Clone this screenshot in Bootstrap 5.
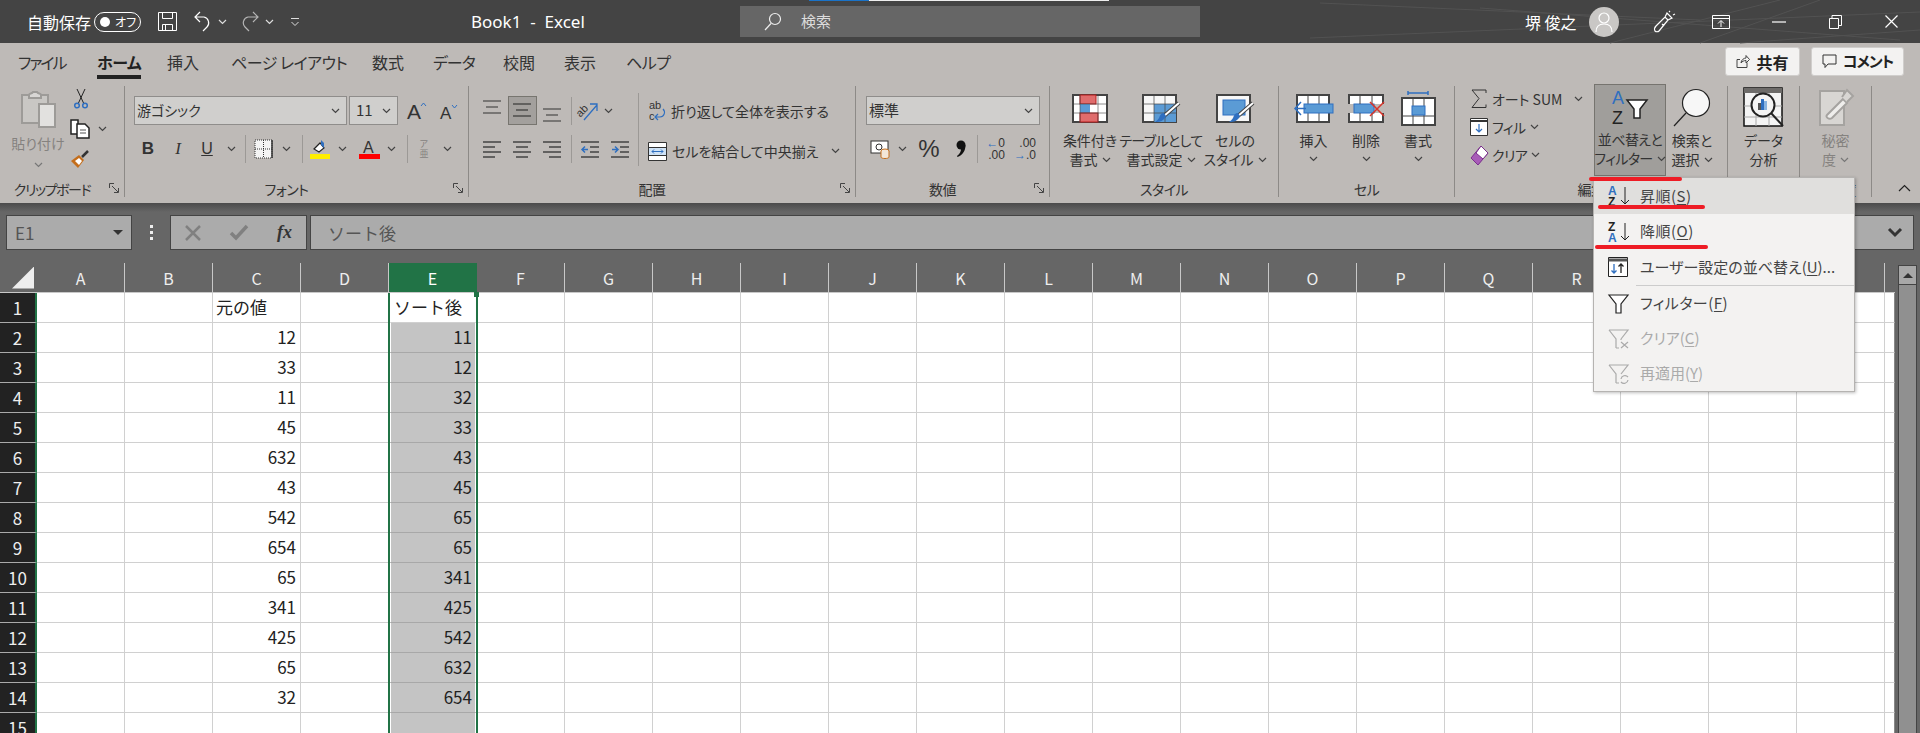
<!DOCTYPE html>
<html lang="ja">
<head>
<meta charset="UTF-8">
<title>Book1 - Excel</title>
<link href="https://cdn.jsdelivr.net/npm/bootstrap@5.3.1/dist/css/bootstrap.min.css" rel="stylesheet">
<style>
  html, body { height: 733px; overflow: hidden; background: #666; }
  body { font-family: "Noto Sans CJK JP", "Noto Sans", sans-serif; font-size: 14px; color: #333; }
  .app { position: relative; width: 1920px; height: 733px; overflow: hidden; font-feature-settings: "palt"; }
  svg { display: block; flex: none; overflow: visible; }
  .chv { width: 9px; height: 6px; fill: none; stroke: #444; stroke-width: 1.2; }
  .chv-dim { stroke: #777; }
  .ms-6px { margin-left: 6px; }
  .ms-13px { margin-left: 13px; }

  /* title bar */
  .titlebar { position: relative; height: 43px; background: #444; color: #fff; padding-left: 27px; }
  .title-lines { position: absolute; left: 1280px; top: 0; }
  .title-strip { position: absolute; left: 809px; top: 0; width: 300px; height: 1px; background: #eee; }
  .title-strip i { display: block; width: 60px; height: 1px; background: #1a73c8; }
  .autosave { font-size: 16px; width: 67px; }
  .toggle { width: 47px; height: 20px; border: 1px solid #fff; border-radius: 10px; font-size: 12px; padding-left: 5px; gap: 5px; line-height: 1; }
  .toggle b { width: 10px; height: 10px; border-radius: 50%; background: #fff; }
  .qat { width: 330px; padding-left: 16px; }
  .qat .chv { stroke: #ddd; }
  .doc-name { width: 269px; font-family: "Noto Sans", sans-serif; font-size: 17px; white-space: pre; }
  .searchbox { width: 460px; height: 31px; background: #666; color: #ddd; font-size: 15px; padding-left: 24px; gap: 19px; }
  .user-name { position: relative; margin-left: 325px; width: 64px; font-size: 16px; }
  .avatar { position: relative; width: 30px; height: 30px; border-radius: 50%; background: #c9c7c5; }
  .win-btns { position: relative; margin-left: 34px; }
  .w-ribbon { margin-left: 37px; } .w-min { margin-left: 42px; } .w-max { margin-left: 43px; } .w-close { margin-left: 43px; }

  /* ribbon */
  .ribbon { height: 160px; background: #bebab7; }
  .tabrow { height: 41px; padding-left: 18px; }
  .ribbon-tabs { display: grid; grid-template-columns: 79px 70px 64px 141px 61px 70px 61px 62px 60px; }
  .ribbon-tabs .nav-link { display: inline-block; height: 36px; line-height: 36px; padding: 0; color: #333; font-size: 16px; margin-top: 1px; white-space: nowrap; }
  .ribbon-tabs .nav-link.active { font-weight: 700; color: #222; height: 35px; box-shadow: inset 0 -4px 0 #222; }
  .ls-a { letter-spacing: -2px; } .ls-b { letter-spacing: -.5px; } .ls-c { letter-spacing: -1px; }
  .share-btns { gap: 11px; padding: 4px 16px 0 0; }
  .share { height: 29px; background: #f3f2f1; border: 1px solid #d0cecc; border-radius: 3px; font-size: 16px; font-weight: 700; color: #222; gap: 6px; }
  .share-a { width: 75px; }
  .share-b { width: 93px; font-size: 15px; letter-spacing: -1px; }

  .groups { height: 113px; }
  .rgroup { height: 113px; flex: none; }
  .gsep { width: 1px; height: 111px; margin-top: 2px; background: #8d8a87; flex: none; }
  .gbody { height: 98px; }
  .gcap { height: 15px; font-size: 14px; line-height: 15px; color: #333; letter-spacing: -.5px; }
  .gcap span { flex: 1; text-align: center; white-space: nowrap; }
  .gcap-clip { letter-spacing: -1.4px; }
  .launch { width: 20px; flex: none; padding-left: 5px; margin-top: 1px; }

  .g-clip { width: 124px; } .g-font { width: 343px; } .g-align { width: 386px; }
  .g-num { width: 193px; } .g-style { width: 228px; } .g-cell { width: 175px; }
  .g-edit { width: 272px; } .g-data { width: 71px; } .g-sens { width: 71px; }

  .bigbtn { display: flex; flex-direction: column; align-items: center; line-height: 19px; white-space: nowrap; }
  .bigicon { height: 46px; padding-top: 2px; }
  .bigtext { padding-top: 1px; }
  .dim { color: #85827f; }
  .chv-slot { padding-top: 6px; }

  .clip-l { width: 70px; padding-left: 6px; }
  .clip-paste { margin-top: 4px; }
  .clip-chv { padding-top: 9px; }
  .clip-r { padding-top: 5px; gap: 10px; }
  .clip-r > div { height: 20px; }

  .combo { height: 29px; background: #d0cfcd; border: 1px solid #8f8d8b; padding: 0 6px 0 2px; font-size: 14px; color: #333; }
  .c-font { width: 213px; } .c-size { width: 49px; font-size: 15px; } .c-num { width: 174px; font-size: 15px; }
  .tools { display: grid; place-items: center; height: 29px; }
  .vsep { width: 1px; height: 28px; background: #9c9996; }
  .font-pane { padding: 12px 0 0 9px; }
  .font-r1 { gap: 2px; }
  .font-r2 { grid-template-columns: 30px 30px 28px 20px 8px 28px 18px 14px 22px 22px 32px 12px 20px 14px 32px; margin-top: 9px; margin-left: -1px; }
  .grow-a { margin-left: 7px; gap: 13px; }
  .shrink-a { margin-top: 2px; }
  .gl-b { font-family: "Liberation Sans", sans-serif; font-size: 17px; }
  .gl-i { font-family: "Liberation Serif", serif; font-size: 17px; }
  .gl-u { font-family: "Liberation Sans", sans-serif; font-size: 16px; }
  .phonetic { font-size: 9px; line-height: 10px; }
  .align-l { padding: 12px 0 0 8px; width: 169px; }
  .al-r1 { grid-template-columns: 30px 30px 30px 8px 26px 14px; }
  .al-r2 { grid-template-columns: 30px 30px 30px 8px 30px 30px; margin-top: 9px; }
  .pressed { width: 29px; height: 29px; background: #a3a09d; border: 1px solid #77756f; display: grid; place-items: center; }
  .vsep-tall { width: 1px; height: 73px; margin-top: 9px; background: #9c9996; }
  .align-r { padding: 14px 0 0 9px; gap: 14px; white-space: nowrap; }
  .align-r > div { height: 26px; gap: 5px; }
  .num-pane { padding: 12px 0 0 10px; }
  .num-r2 { grid-template-columns: 28px 16px 38px 24px 11px 25px 34px; margin-top: 9px; }
  .gl-pct { font-family: "Liberation Sans", sans-serif; font-size: 24px; line-height: 1; }
  .decimal { font-family: "Liberation Sans", sans-serif; font-size: 12px; line-height: 12px; text-align: right; color: #333; }
  .decimal span { color: #2f6fc0; }
  .style-pane { padding-left: 6px; }
  .st-1 { width: 68px; } .st-2 { width: 74px; } .st-3 { width: 74px; }
  .tight { letter-spacing: -.6px; }
  .cell-pane { padding-left: 8px; }
  .ce-1 { width: 53px; } .ce-2 { width: 52px; } .ce-3 { width: 52px; }
  .edit-list { width: 139px; padding: 1px 0 0 15px; white-space: nowrap; }
  .edit-list > div { height: 28px; gap: 4px; }
  .sort-btn { width: 72px; height: 92px; background: #a09e9b; border: 1px solid #76746f; }
  .sort-btn .bigicon { height: 45px; padding-top: 4px; }
  .find-btn { width: 52px; }
  .find-glass { margin-top: 1px; }
  .sens-svg { margin-top: 2px; }

  .collapse-btn { padding: 0; margin-left: 26px; align-self: flex-end; margin-bottom: 5px; }
  .collapse-btn .chv { width: 13px; height: 8px; stroke: #222; }

  /* formula bar */
  .fbar { height: 60px; padding: 12px 6px 13px 6px; background: linear-gradient(#4b4b4b 0, #666 9px); }
  .fbox { height: 35px; background: #ababab; border: 1px solid #444; color: #555; }
  .namebox { width: 126px; padding: 0 8px; font-size: 17px; }
  .dots { width: 38px; gap: 3px; }
  .dots i { width: 3px; height: 3px; background: #eee; }
  .fxbox { width: 137px; padding: 0 14px; margin-right: 3px; }
  .fxtxt { font-family: "Liberation Serif", serif; font-style: italic; font-weight: 700; font-size: 18px; color: #333; }
  .finput { flex: 1; padding: 0 11px 0 17px; font-size: 17px; font-feature-settings: normal; }
  .fdrop { fill: #333; }

  /* sheet */
  .sheet-wrap { position: relative; height: 470px; }
  table.gridsheet { border-collapse: separate; border-spacing: 0; table-layout: fixed; width: 1895px; font-size: 17px; font-feature-settings: normal; line-height: 1; }
  .gridsheet col.c-head { width: 37px; }
  .gridsheet col.c-std { width: 88px; }
  .gridsheet col.c-end { width: 10px; }
  .gridsheet tr { height: 30px; }
  .gridsheet th, .gridsheet td { padding: 0; font-weight: 400; }
  .gridsheet thead th { background: #666; color: #eee; text-align: center; border-right: 1px solid #c8c8c8; border-bottom: 1px solid #c8c8c8; font-size: 16px; }
  .gridsheet thead th.on { background: #217346; color: #fff; border-right-color: #217346; }
  .gridsheet thead th.corner { border-right: 0; }
  .gridsheet thead th.tail { border-right: 0; background: #666; }
  .gridsheet tbody th { background: #222; color: #eee; text-align: center; border-right: 2px solid #217346; border-bottom: 1px solid #aaa; }
  .gridsheet td { background: #fff; border-right: 1px solid #d0d0d0; border-bottom: 1px solid #d0d0d0; color: #222; padding: 0 4px 2px 3px; text-align: right; white-space: nowrap; }
  .gridsheet td.txt { text-align: left; }
  .gridsheet td.sel { background: #c4c4c4; border-bottom-color: #a8a8a8; border-left: 2px solid #fff; border-right: 2px solid #fff; padding-right: 3px; }
  .gridsheet td.active { background: #fff; border-left: 2px solid #fff; border-right: 2px solid #fff; }
  .gridsheet td.tail { border-right: 1px solid #888; padding: 0; }
  .corner-mark { width: 22px; height: 22px; margin: 0 3px 0 auto; background: #eee; clip-path: polygon(100% 0, 100% 100%, 0 100%); }
  .sel-box { position: absolute; left: 388px; top: 30px; width: 90px; bottom: 0; border: solid #217346; border-width: 0 2px; pointer-events: none; }
  .sel-handle { position: absolute; left: 474px; top: 29px; width: 5px; height: 5px; background: #217346; }
  .vscroll { width: 25px; height: 470px; flex: none; padding: 2px 3px 0 3px; background: #666; }
  .vs-up { height: 20px; background: #a8a8a8; border: 1px solid #444; }
  .vs-thumb { flex: 1; background: #909090; border: solid #444; border-width: 0 1px; }

  /* sort menu */
  .sort-menu.dropdown-menu { position: absolute; display: block; left: 1593px; top: 177px; width: 262px; height: 215px; padding: 0; margin: 0; background: #f3f2f1; border: 1px solid #b5b3b1; border-radius: 0; box-shadow: 1px 1px 3px rgba(0,0,0,.25); font-size: 15px; }
  .sort-menu .dropdown-item { height: 35px; padding: 0 0 0 14px; gap: 9px; color: #444; white-space: nowrap; }
  .sort-menu .dropdown-item.tall { height: 36px; }
  .sort-menu .dropdown-item.hovered { background: #e0dfdd; }
  .sort-menu .dropdown-item.disabled { color: #aaa; background: none; }
  .sort-menu u { text-underline-offset: 2px; }
  .sort-menu .icon-slot { width: 23px; }
  .wide-txt { letter-spacing: .5px; }
  .menu-rule { height: 1px; background: #ccc; margin-left: 42px; }
  .redmark { position: absolute; z-index: 1001; height: 4px; background: #ee1c25; border-radius: 2px; }
  .rm-1 { left: 1589px; top: 177px; width: 93px; }
  .rm-2 { left: 1598px; top: 205px; width: 107px; }
  .rm-3 { left: 1595px; top: 245px; width: 113px; }
</style>
</head>
<body>
<div class="app">

  <!-- title bar -->
  <header class="titlebar d-flex align-items-center">
    <svg class="title-lines" width="640" height="43" fill="none" stroke="#525252"><path d="M40 3 420 20M30 38 640 12M200 8 620 40M330 43 500 0M460 43 640 30M540 0 420 43"/></svg>
    <div class="title-strip"><i></i></div>
    <div class="autosave">自動保存</div>
    <div class="toggle d-flex align-items-center"><b></b>オフ</div>
    <div class="qat d-flex align-items-center">
      <svg width="21" height="21" viewBox="0 0 21 21" fill="none" stroke="#fff"><path d="M1.5 1.500h18v18h-18zM5.500 1.500v6h10v-6M5.500 19.500v-6h10v6M8.500 13.500v6"/></svg>
      <svg class="ms-3" width="18" height="21" viewBox="0 0 18 21" fill="none" stroke="#fff" stroke-width="1.2"><path d="M6 1 1 6l5 5M1 6h9a6 6 0 0 1 3 10l-4 4"/></svg>
      <svg class="chv ms-6px" viewBox="0 0 9 6"><path d="M1 1l3.500 3.500L8 1"/></svg>
      <svg class="ms-13px" width="19" height="21" viewBox="0 0 19 21" fill="none" stroke="#b5b5b5" stroke-width="1.2"><path d="M13 1l5 5-5 5M18 6H8a6 6 0 0 0-3 10l4 4"/></svg>
      <svg class="chv ms-6px" viewBox="0 0 9 6"><path d="M1 1l3.500 3.500L8 1"/></svg>
      <svg class="ms-3" width="10" height="10" viewBox="0 0 10 10" fill="none" stroke="#ddd"><path d="M1 1.500h8M1.500 5 5 8.500 8.500 5"/></svg>
    </div>
    <div class="doc-name">Book1  -  Excel</div>
    <div class="searchbox d-flex align-items-center">
      <svg width="18" height="19" viewBox="0 0 18 19" fill="none" stroke="#eee" stroke-width="1.2"><circle cx="11" cy="7" r="5.500"/><path d="M7 11.500 1 18"/></svg>
      <span>検索</span>
    </div>
    <div class="user-name">堺 俊之</div>
    <div class="avatar d-flex align-items-center justify-content-center">
      <svg width="20" height="22" viewBox="0 0 20 22" fill="none" stroke="#fff" stroke-width="1.2"><circle cx="10" cy="7" r="5"/><path d="M2 21c0-5 3-8 8-8s8 3 8 8"/></svg>
    </div>
    <div class="win-btns d-flex align-items-center">
      <svg width="22" height="22" viewBox="0 0 22 22" fill="none" stroke="#fff" stroke-width="1.2"><path d="M2 20c1 1 3 1 4 0L15 9l-3-3L3 15c-1 1-2 3-1 5zM12 6l2-4 5 5-4 2M16 1l1-1M20 4l2-1M9 13l2 2"/></svg>
      <svg class="w-ribbon" width="18" height="16" viewBox="0 0 18 16" fill="none" stroke="#fff"><path d="M.5 1.500h17v13H.5zM.5 4.500h17M9 13V7M6 9.500 9 6.500l3 3"/></svg>
      <svg class="w-min" width="14" height="2" viewBox="0 0 14 2"><path d="M0 1h14" stroke="#fff" stroke-width="1.200"/></svg>
      <svg class="w-max" width="13" height="14" viewBox="0 0 13 14" fill="none" stroke="#fff"><path d="M.5 3.500h9v10h-9zM3 3.500V.5h9.500v10H9.500"/></svg>
      <svg class="w-close" width="13" height="13" viewBox="0 0 13 13" fill="none" stroke="#fff" stroke-width="1.200"><path d="M.5.5l12 12M12.500.5l-12 12"/></svg>
    </div>
  </header>

  <!-- ribbon -->
  <section class="ribbon">
    <div class="tabrow d-flex">
      <ul class="nav ribbon-tabs">
        <li class="nav-item"><a class="nav-link ls-a" href="#">ファイル</a></li>
        <li class="nav-item"><a class="nav-link active ls-b" href="#">ホーム</a></li>
        <li class="nav-item"><a class="nav-link" href="#">挿入</a></li>
        <li class="nav-item"><a class="nav-link ls-b" href="#">ページ レイアウト</a></li>
        <li class="nav-item"><a class="nav-link" href="#">数式</a></li>
        <li class="nav-item"><a class="nav-link ls-c" href="#">データ</a></li>
        <li class="nav-item"><a class="nav-link" href="#">校閲</a></li>
        <li class="nav-item"><a class="nav-link" href="#">表示</a></li>
        <li class="nav-item"><a class="nav-link ls-b" href="#">ヘルプ</a></li>
      </ul>
      <div class="share-btns d-flex ms-auto">
        <div class="share share-a d-flex align-items-center justify-content-center">
          <svg width="14" height="15" viewBox="0 0 14 15" fill="none" stroke="#444"><path d="M11 8.500v5H1v-8h3M5 9c0-3 3-5 5-5V1.500l3.500 4L10 9V6.500C8 6.500 6 7.500 5 9z"/></svg>共有
        </div>
        <div class="share share-b d-flex align-items-center justify-content-center">
          <svg width="15" height="15" viewBox="0 0 15 15" fill="none" stroke="#333"><path d="M1 1h13v9H6l-3 3.500V10H1z"/></svg>コメント
        </div>
      </div>
    </div>

    <div class="groups d-flex">
      <!-- clipboard -->
      <div class="rgroup g-clip">
        <div class="gbody d-flex">
          <div class="clip-l bigbtn dim">
            <div class="bigicon d-flex justify-content-center">
              <svg class="clip-paste" width="36" height="38" viewBox="0 0 36 38" fill="#e2e1df" stroke="#9d9b98" stroke-width="2"><path d="M2 5h26v28H2z" fill="#c9c7c4"/><path d="M9 5c0-2 3-1 4-3h4c1 2 4 1 4 3v3H9z" fill="#d8d6d4"/><path d="M19 14h16v23H19z"/></svg>
            </div>
            <div class="mt-1">貼り付け</div>
            <div class="clip-chv"><svg class="chv chv-dim" viewBox="0 0 9 6"><path d="M1 1l3.500 3.500L8 1"/></svg></div>
          </div>
          <div class="clip-r d-flex flex-column">
            <div class="d-flex ms-1">
              <svg width="14" height="20" viewBox="0 0 14 20" fill="none"><path d="M3 0l7 15M11 0 4 15" stroke="#222"/><circle cx="3" cy="16.500" r="2.300" stroke="#2f6fc0" stroke-width="1.500"/><circle cx="11" cy="16.500" r="2.300" stroke="#2f6fc0" stroke-width="1.500"/></svg>
            </div>
            <div class="d-flex align-items-center gap-2">
              <svg width="20" height="20" viewBox="0 0 20 20" fill="#fff" stroke="#222"><path d="M1 1h7v14H1z" stroke-width="1.500"/><path d="M7 5h8l4 4v10H7z" stroke-width="1.500"/><path d="M10 11h6M10 14h6" stroke="#555"/></svg>
              <svg class="chv" viewBox="0 0 9 6"><path d="M1 1l3.500 3.500L8 1"/></svg>
            </div>
            <div class="d-flex">
              <svg width="20" height="20" viewBox="0 0 20 20"><path d="M1 12l8-6 5 5-6 8z" fill="#c46e1c"/><path d="M5 12l4-3 3 3-3 4z" fill="#fff"/><path d="M12 8l6-6" stroke="#333" stroke-width="2.500"/></svg>
            </div>
          </div>
        </div>
        <div class="gcap gcap-clip d-flex"><span>クリップボード</span><div class="launch"><svg width="10" height="10" viewBox="0 0 10 10" fill="none" stroke="#444"><path d="M.5 5V.5H5M3 3l6 6M9.500 5v4.500H5"/></svg></div></div>
      </div>
      <div class="gsep"></div>

      <!-- font -->
      <div class="rgroup g-font">
        <div class="gbody font-pane">
          <div class="font-r1 d-flex align-items-center">
            <div class="combo c-font d-flex align-items-center justify-content-between">游ゴシック<svg class="chv" viewBox="0 0 9 6"><path d="M1 1l3.500 3.500L8 1"/></svg></div>
            <div class="combo c-size d-flex align-items-center justify-content-between"><span class="ms-1">11</span><svg class="chv" viewBox="0 0 9 6"><path d="M1 1l3.500 3.500L8 1"/></svg></div>
            <div class="grow-a d-flex">
              <svg width="20" height="20" viewBox="0 0 20 20" fill="none"><text x="0" y="18" font-family="Liberation Sans" font-size="21" fill="#333">A</text><path d="M14 5l2.500-3L19 5" stroke="#2f6fc0"/></svg>
              <svg class="shrink-a" width="18" height="18" viewBox="0 0 18 18" fill="none"><text x="0" y="16" font-family="Liberation Sans" font-size="17" fill="#333">A</text><path d="M12 2l2.500 3L17 2" stroke="#2f6fc0"/></svg>
            </div>
          </div>
          <div class="tools font-r2">
            <b class="gl-b">B</b>
            <i class="gl-i">I</i>
            <span class="gl-u text-decoration-underline">U</span>
            <svg class="chv" viewBox="0 0 9 6"><path d="M1 1l3.500 3.500L8 1"/></svg>
            <div class="vsep"></div>
            <svg width="19" height="20" viewBox="0 0 19 20"><rect x="1" y="1" width="17" height="18" fill="#f4f4f4" stroke="#333" stroke-dasharray="1 1"/><path d="M9.500 1v18M1 10h17" stroke="#333" stroke-dasharray="1 1"/><path d="M18 1v18" stroke="#333" stroke-width="1.500"/></svg>
            <svg class="chv" viewBox="0 0 9 6"><path d="M1 1l3.500 3.500L8 1"/></svg>
            <div class="vsep"></div>
            <svg width="20" height="20" viewBox="0 0 20 20"><path d="M4 10l6-6 4 5-5 4z" fill="#fff" stroke="#222" stroke-width="1.200"/><path d="M11 1v5l3 3V4z" fill="#2f6fc0"/><rect y="15" width="20" height="5" fill="#ffee00"/></svg>
            <svg class="chv" viewBox="0 0 9 6"><path d="M1 1l3.500 3.500L8 1"/></svg>
            <svg width="21" height="20" viewBox="0 0 21 20"><text x="4" y="14" font-family="Liberation Sans" font-size="16" fill="#333">A</text><rect y="15" width="21" height="5" fill="#f00"/></svg>
            <svg class="chv" viewBox="0 0 9 6"><path d="M1 1l3.500 3.500L8 1"/></svg>
            <div class="vsep"></div>
            <div class="phonetic d-flex flex-column align-items-center dim">ア<br>亜</div>
            <svg class="chv" viewBox="0 0 9 6"><path d="M1 1l3.500 3.500L8 1"/></svg>
          </div>
        </div>
        <div class="gcap d-flex"><span>フォント</span><div class="launch"><svg width="10" height="10" viewBox="0 0 10 10" fill="none" stroke="#444"><path d="M.5 5V.5H5M3 3l6 6M9.500 5v4.500H5"/></svg></div></div>
      </div>
      <div class="gsep"></div>

      <!-- alignment -->
      <div class="rgroup g-align">
        <div class="gbody d-flex">
          <div class="align-l">
            <div class="tools al-r1">
              <svg width="18" height="29" viewBox="0 0 18 29" stroke="#333" stroke-width="1.200"><path d="M0 5h18M3 11h12M0 17h18"/></svg>
              <div class="pressed"><svg width="18" height="27" viewBox="0 0 18 27" stroke="#222" stroke-width="1.200"><path d="M0 7h18M3 13h12M0 19h18"/></svg></div>
              <svg width="18" height="29" viewBox="0 0 18 29" stroke="#333" stroke-width="1.200"><path d="M0 13h18M3 19h12M0 25h18"/></svg>
              <div class="vsep"></div>
              <svg width="22" height="22" viewBox="0 0 22 22" fill="none"><text x="0" y="14" transform="rotate(-45 6 12)" font-family="Liberation Sans" font-size="11" fill="#333">ab</text><path d="M7 20 20 5M13 4h7v7" stroke="#2f6fc0" stroke-width="1.300"/></svg>
              <svg class="chv" viewBox="0 0 9 6"><path d="M1 1l3.500 3.500L8 1"/></svg>
            </div>
            <div class="tools al-r2">
              <svg width="18" height="18" viewBox="0 0 18 18" stroke="#444" stroke-width="1.500"><path d="M0 2h18M0 7h12M0 12h18M0 17h12"/></svg>
              <svg width="18" height="18" viewBox="0 0 18 18" stroke="#444" stroke-width="1.500"><path d="M0 2h18M3 7h12M0 12h18M3 17h12"/></svg>
              <svg width="18" height="18" viewBox="0 0 18 18" stroke="#444" stroke-width="1.500"><path d="M0 2h18M6 7h12M0 12h18M6 17h12"/></svg>
              <div class="vsep"></div>
              <svg width="18" height="18" viewBox="0 0 18 18" fill="none" stroke-width="1.500"><path d="M0 2h18M9 7h9M9 12h9M0 17h18" stroke="#444"/><path d="M7 9.500H1M4 6.500l-3 3 3 3" stroke="#2f6fc0"/></svg>
              <svg width="18" height="18" viewBox="0 0 18 18" fill="none" stroke-width="1.500"><path d="M0 2h18M9 7h9M9 12h9M0 17h18" stroke="#444"/><path d="M1 9.500h6M4 6.500l3 3-3 3" stroke="#2f6fc0"/></svg>
            </div>
          </div>
          <div class="vsep-tall"></div>
          <div class="align-r d-flex flex-column">
            <div class="d-flex align-items-center">
              <svg width="18" height="22" viewBox="0 0 18 22" fill="none"><text x="1" y="9" font-family="Liberation Sans" font-size="11" fill="#333">ab</text><text x="1" y="20" font-family="Liberation Sans" font-size="11" fill="#333">c</text><path d="M15 9c3 3 1 8-3 8H7M10 14l-3 3 3 3" stroke="#2f6fc0" stroke-width="1.200"/></svg>
              <span>折り返して全体を表示する</span>
            </div>
            <div class="d-flex align-items-center">
              <svg width="19" height="19" viewBox="0 0 19 19" fill="#fff" stroke="#333"><path d="M.5.5h18v18H.5z"/><path d="M.5 5.500h18M.5 13.500h18"/><rect x="1" y="6" width="17" height="7" fill="#cfe2f5" stroke="none"/><path d="M4 9.500h11M6 7.500l-2 2 2 2M13 7.500l2 2-2 2" stroke="#2f6fc0" fill="none"/></svg>
              <span>セルを結合して中央揃え</span>
              <svg class="chv ms-2" viewBox="0 0 9 6"><path d="M1 1l3.500 3.500L8 1"/></svg>
            </div>
          </div>
        </div>
        <div class="gcap d-flex"><span>配置</span><div class="launch"><svg width="10" height="10" viewBox="0 0 10 10" fill="none" stroke="#444"><path d="M.5 5V.5H5M3 3l6 6M9.500 5v4.500H5"/></svg></div></div>
      </div>
      <div class="gsep"></div>

      <!-- number -->
      <div class="rgroup g-num">
        <div class="gbody num-pane">
          <div class="combo c-num d-flex align-items-center justify-content-between">標準<svg class="chv" viewBox="0 0 9 6"><path d="M1 1l3.500 3.500L8 1"/></svg></div>
          <div class="tools num-r2">
            <svg width="20" height="20" viewBox="0 0 20 20" fill="none"><rect x="1" y="2" width="17" height="12" fill="#fff" stroke="#333"/><circle cx="9" cy="8" r="3" stroke="#333"/><ellipse cx="15" cy="12" rx="4" ry="2" fill="#f3e6d8" stroke="#c46e1c"/><path d="M11 12v6c0 2 8 2 8 0v-6" fill="#f3e6d8" stroke="#c46e1c"/></svg>
            <svg class="chv" viewBox="0 0 9 6"><path d="M1 1l3.500 3.500L8 1"/></svg>
            <span class="gl-pct">%</span>
            <svg width="11" height="18" viewBox="0 0 11 18"><circle cx="6" cy="5" r="4.500" fill="#111"/><path d="M10.500 5c0 6-3 10-8 12l-.5-1c3-2 4-5 4-7z" fill="#111"/></svg>
            <div class="vsep"></div>
            <div class="decimal"><span>←</span>0<br>.00</div>
            <div class="decimal">.00<br><span>→</span>.0</div>
          </div>
        </div>
        <div class="gcap d-flex"><span>数値</span><div class="launch"><svg width="10" height="10" viewBox="0 0 10 10" fill="none" stroke="#444"><path d="M.5 5V.5H5M3 3l6 6M9.500 5v4.500H5"/></svg></div></div>
      </div>
      <div class="gsep"></div>

      <!-- styles -->
      <div class="rgroup g-style">
        <div class="gbody style-pane d-flex">
          <div class="bigbtn st-1">
            <div class="bigicon d-flex justify-content-center align-items-center">
              <svg width="36" height="29" viewBox="0 0 36 29"><rect x="1" y="1" width="34" height="27" fill="#fff" stroke="#444" stroke-width="2"/><rect x="8" y="1" width="16" height="9" fill="#e06c6c" stroke="#b81c1c"/><rect x="8" y="10" width="10" height="9" fill="#5b9bd5"/><rect x="8" y="19" width="18" height="9" fill="#e06c6c" stroke="#b81c1c"/><path d="M26 1v27M8 1v27M1 10h34M1 19h34" stroke="#444" fill="none" opacity=".6"/></svg>
            </div>
            <div class="bigtext">条件付き</div>
            <div class="d-flex align-items-center justify-content-center gap-1">書式<svg class="chv" viewBox="0 0 9 6"><path d="M1 1l3.500 3.500L8 1"/></svg></div>
          </div>
          <div class="bigbtn st-2">
            <div class="bigicon d-flex justify-content-center align-items-center">
              <svg width="39" height="29" viewBox="0 0 39 29"><rect x="1" y="1" width="33" height="27" fill="#f7f7f7" stroke="#444" stroke-width="2"/><rect x="12" y="10" width="22" height="18" fill="#5b9bd5"/><path d="M12 1v27M23 1v27M1 10h33M1 19h33" stroke="#444" fill="none" opacity=".7"/><path d="M37 9 22 22" stroke="#444" stroke-width="4"/><path d="M37 9 22 22" stroke="#fff" stroke-width="2"/><path d="M22 19c-3 0-4 2-5 5-1 2-3 3-4 4 5 0 9-1 11-6z" fill="#2f6fc0"/></svg>
            </div>
            <div class="bigtext tight">テーブルとして</div>
            <div class="d-flex align-items-center justify-content-center gap-1">書式設定<svg class="chv" viewBox="0 0 9 6"><path d="M1 1l3.500 3.500L8 1"/></svg></div>
          </div>
          <div class="bigbtn st-3">
            <div class="bigicon d-flex justify-content-center align-items-center">
              <svg width="39" height="29" viewBox="0 0 39 29"><rect x="1" y="1" width="33" height="27" fill="#f7f7f7" stroke="#444" stroke-width="2"/><rect x="7" y="6" width="22" height="15" fill="#5b9bd5" stroke="#2f6fc0"/><path d="M37 9 22 22" stroke="#444" stroke-width="4"/><path d="M37 9 22 22" stroke="#fff" stroke-width="2"/><path d="M22 19c-3 0-4 2-5 5-1 2-3 3-4 4 5 0 9-1 11-6z" fill="#2f6fc0"/></svg>
            </div>
            <div class="bigtext">セルの</div>
            <div class="d-flex align-items-center justify-content-center gap-1">スタイル<svg class="chv" viewBox="0 0 9 6"><path d="M1 1l3.500 3.500L8 1"/></svg></div>
          </div>
        </div>
        <div class="gcap d-flex"><span>スタイル</span></div>
      </div>
      <div class="gsep"></div>

      <!-- cells -->
      <div class="rgroup g-cell">
        <div class="gbody cell-pane d-flex">
          <div class="bigbtn ce-1">
            <div class="bigicon d-flex justify-content-center align-items-center">
              <svg width="39" height="29" viewBox="0 0 39 29"><rect x="3" y="1" width="32" height="27" fill="#fff" stroke="#444" stroke-width="2"/><path d="M14 1v27M25 1v27" stroke="#444" fill="none"/><rect x="10" y="10" width="29" height="9" fill="#5b9bd5" stroke="#2f6fc0"/><path d="M12 14.500H1M7 8l-6 6.500L7 21" stroke="#2f6fc0" stroke-width="1.500" fill="none"/></svg>
            </div>
            <div class="bigtext">挿入</div>
            <div class="chv-slot"><svg class="chv" viewBox="0 0 9 6"><path d="M1 1l3.500 3.500L8 1"/></svg></div>
          </div>
          <div class="bigbtn ce-2">
            <div class="bigicon d-flex justify-content-center align-items-center">
              <svg width="37" height="29" viewBox="0 0 37 29"><path d="M1 10V1h34v9M1 19v9h34v-9" fill="#fff" stroke="#444" stroke-width="2"/><rect x="6" y="10" width="20" height="9" fill="#5b9bd5" stroke="#2f6fc0"/><path d="M12 1v9M24 1v9M12 19v9M24 19v9" stroke="#444"/><path d="M22 8l14 14M36 8 22 22" stroke="#d8342a" stroke-width="1.500"/></svg>
            </div>
            <div class="bigtext">削除</div>
            <div class="chv-slot"><svg class="chv" viewBox="0 0 9 6"><path d="M1 1l3.500 3.500L8 1"/></svg></div>
          </div>
          <div class="bigbtn ce-3">
            <div class="bigicon d-flex justify-content-center align-items-center">
              <svg width="35" height="36" viewBox="0 0 35 36"><path d="M7 3h20M7 1v4M27 1v4" stroke="#2f6fc0" stroke-width="1.500" fill="none"/><rect x="1" y="8" width="33" height="27" fill="#fff" stroke="#444" stroke-width="2"/><path d="M12 8v27M23 8v27M1 26h33" stroke="#444"/><rect x="11" y="16" width="13" height="9" fill="#5b9bd5" stroke="#2f6fc0"/></svg>
            </div>
            <div class="bigtext">書式</div>
            <div class="chv-slot"><svg class="chv" viewBox="0 0 9 6"><path d="M1 1l3.500 3.500L8 1"/></svg></div>
          </div>
        </div>
        <div class="gcap d-flex"><span>セル</span></div>
      </div>
      <div class="gsep"></div>

      <!-- editing -->
      <div class="rgroup g-edit">
        <div class="gbody d-flex">
          <div class="edit-list d-flex flex-column">
            <div class="d-flex align-items-center">
              <svg width="18" height="20" viewBox="0 0 18 20" fill="none" stroke="#333"><path d="M16 4V1H2l7 8.500L2 18.500h14v-3"/></svg>
              <span>オート SUM</span>
              <svg class="chv ms-2" viewBox="0 0 9 6"><path d="M1 1l3.500 3.500L8 1"/></svg>
            </div>
            <div class="d-flex align-items-center">
              <svg width="18" height="18" viewBox="0 0 18 18" fill="#fff" stroke="#333"><path d="M.5.5h17v17H.5z"/><path d="M.5 3h17" stroke-width="2"/><path d="M9 6v8M6 11l3 3 3-3" stroke="#2f6fc0" stroke-width="1.200" fill="none"/></svg>
              <span class="tight">フィル</span>
              <svg class="chv" viewBox="0 0 9 6"><path d="M1 1l3.500 3.500L8 1"/></svg>
            </div>
            <div class="d-flex align-items-center">
              <svg width="18" height="20" viewBox="0 0 18 20"><path d="M1 13 11 1l7 7L8 20z" fill="#a85cb8" stroke="#7a2f8c"/><path d="M6 8l5-7 7 7-5 6z" fill="#fff" stroke="#7a2f8c"/></svg>
              <span class="tight">クリア</span>
              <svg class="chv" viewBox="0 0 9 6"><path d="M1 1l3.500 3.500L8 1"/></svg>
            </div>
          </div>
          <div class="sort-btn bigbtn">
            <div class="bigicon d-flex justify-content-center">
              <svg width="37" height="39" viewBox="0 0 37 39"><text x="0" y="15" font-family="Liberation Sans" font-size="18" fill="#2f6fc0">A</text><text x="0" y="35" font-family="Liberation Sans" font-size="18" fill="#222">Z</text><path d="M15 11h20l-7 9v9h-6v-9z" fill="#fff" stroke="#222" stroke-width="1.500"/></svg>
            </div>
            <div class="tight">並べ替えと</div>
            <div class="d-flex align-items-center justify-content-center gap-1 tight">フィルター<svg class="chv" viewBox="0 0 9 6"><path d="M1 1l3.500 3.500L8 1"/></svg></div>
          </div>
          <div class="find-btn bigbtn">
            <div class="bigicon d-flex justify-content-center">
              <svg class="find-glass" width="38" height="42" viewBox="0 0 38 42" fill="none"><circle cx="23" cy="16" r="13.500" fill="#f7f7f7" stroke="#222" stroke-width="1.200"/><path d="M13 26 1 39" stroke="#222" stroke-width="1.200"/></svg>
            </div>
            <div class="bigtext">検索と</div>
            <div class="d-flex align-items-center justify-content-center gap-1">選択<svg class="chv" viewBox="0 0 9 6"><path d="M1 1l3.500 3.500L8 1"/></svg></div>
          </div>
        </div>
        <div class="gcap d-flex"><span>編集</span></div>
      </div>
      <div class="gsep"></div>

      <!-- analysis -->
      <div class="rgroup g-data">
        <div class="gbody bigbtn">
          <div class="bigicon d-flex justify-content-center">
            <svg width="42" height="42" viewBox="0 0 42 42" fill="none"><rect x="1" y="2" width="38" height="38" fill="#f4f4f4" stroke="#111" stroke-width="1.500"/><rect x="1" y="2" width="38" height="5" fill="#6d6b69"/><path d="M1 20h38M1 31h38M13 7v33M26 7v33" stroke="#aaa"/><circle cx="20" cy="19" r="11.500" fill="#f4f4f4" stroke="#222" stroke-width="2"/><path d="M28 27 40 40" stroke="#222" stroke-width="2"/><rect x="15" y="17" width="3" height="7" fill="#555"/><rect x="18" y="13" width="3" height="11" fill="#2f6fc0"/><rect x="21" y="15" width="3" height="9" fill="#8ab4e0"/></svg>
          </div>
          <div class="bigtext">データ</div>
          <div>分析</div>
        </div>
        <div class="gcap d-flex"><span>分析</span></div>
      </div>
      <div class="gsep"></div>

      <!-- sensitivity -->
      <div class="rgroup g-sens">
        <div class="gbody bigbtn dim">
          <div class="bigicon d-flex justify-content-center">
            <svg class="sens-svg" width="36" height="38" viewBox="0 0 36 38" fill="none"><rect x="2" y="3" width="24" height="34" fill="#d8d6d3" stroke="#a5a3a0" stroke-width="2"/><path d="M9 27 25 11l4 4-15 15c-3 2-7-1-5-3z" fill="#efeeec" stroke="#a5a3a0" stroke-width="2"/><path d="M24 9l5-7 6 6-6 6" fill="#d8d6d3" stroke="#a5a3a0" stroke-width="2"/></svg>
          </div>
          <div class="bigtext">秘密</div>
          <div class="d-flex align-items-center justify-content-center gap-1">度<svg class="chv chv-dim" viewBox="0 0 9 6"><path d="M1 1l3.500 3.500L8 1"/></svg></div>
        </div>
        <div class="gcap d-flex"><span>秘密度</span></div>
      </div>
      <div class="gsep"></div>

      <div class="collapse-btn"><svg class="chv" viewBox="0 0 13 8"><path d="M1 7l5.500-5.500L12 7"/></svg></div>
    </div>
  </section>

  <!-- formula bar -->
  <div class="fbar d-flex">
    <div class="fbox namebox d-flex align-items-center justify-content-between">E1
      <svg width="10" height="5" viewBox="0 0 10 5" class="fdrop"><path d="M0 0h10L5 5z"/></svg>
    </div>
    <div class="dots d-flex flex-column align-items-center justify-content-center"><i></i><i></i><i></i></div>
    <div class="fbox fxbox d-flex align-items-center justify-content-between">
      <svg width="16" height="16" viewBox="0 0 16 16" fill="none" stroke="#808080" stroke-width="2.500"><path d="M1 1l14 14M15 1 1 15"/></svg>
      <svg width="18" height="15" viewBox="0 0 18 15" fill="none" stroke="#808080" stroke-width="3.500"><path d="M1 8l5 5L17 1"/></svg>
      <span class="fxtxt">fx</span>
    </div>
    <div class="fbox finput d-flex align-items-center justify-content-between">
      <span>ソート後</span>
      <svg width="14" height="9" viewBox="0 0 14 9" fill="none" stroke="#333" stroke-width="3"><path d="M1 1l6 6 6-6"/></svg>
    </div>
  </div>

  <!-- sheet -->
  <div class="sheet-wrap d-flex">
    <div>
      <table class="gridsheet">
        <colgroup id="gridCols"></colgroup>
        <thead><tr id="gridHead"></tr></thead>
        <tbody id="gridBody"></tbody>
      </table>
    </div>
    <div class="vscroll d-flex flex-column">
      <div class="vs-up d-flex align-items-center justify-content-center">
        <svg width="10" height="5" viewBox="0 0 10 5" fill="#333"><path d="M0 5h10L5 0z"/></svg>
      </div>
      <div class="vs-thumb"></div>
    </div>
    <div class="sel-box"></div>
    <div class="sel-handle"></div>
  </div>

  <!-- sort menu -->
  <div class="dropdown-menu sort-menu">
    <a class="dropdown-item tall hovered d-flex align-items-center" href="#">
      <span class="icon-slot"><svg width="23" height="20" viewBox="0 0 23 20" font-family="Liberation Sans" font-weight="700" font-size="12"><text x="0" y="9" fill="#2f6fc0">A</text><text x="0" y="20" fill="#222">Z</text><path d="M17 1v17M13 14l4 4 4-4" fill="none" stroke="#222"/></svg></span>
      <span class="wide-txt">昇順(<u>S</u>)</span>
    </a>
    <a class="dropdown-item d-flex align-items-center" href="#">
      <span class="icon-slot"><svg width="23" height="20" viewBox="0 0 23 20" font-family="Liberation Sans" font-weight="700" font-size="12"><text x="0" y="9" fill="#222">Z</text><text x="0" y="20" fill="#2f6fc0">A</text><path d="M17 1v17M13 14l4 4 4-4" fill="none" stroke="#222"/></svg></span>
      <span class="wide-txt">降順(<u>O</u>)</span>
    </a>
    <a class="dropdown-item tall d-flex align-items-center" href="#">
      <span class="icon-slot"><svg width="20" height="20" viewBox="0 0 20 20" fill="#fff" stroke="#222"><path d="M.5.5h19v19H.5z"/><path d="M.5 3h19" stroke-width="3" stroke="#555"/><path d="M6 7v9M3.500 13.500 6 16l2.500-2.500" stroke="#2f6fc0" fill="none" stroke-width="1.300"/><path d="M13 16V7M10.500 9.500 13 7l2.500 2.500" stroke="#222" fill="none" stroke-width="1.300"/></svg></span>
      <span>ユーザー設定の並べ替え(<u>U</u>)...</span>
    </a>
    <div class="menu-rule"></div>
    <a class="dropdown-item d-flex align-items-center" href="#">
      <span class="icon-slot"><svg width="21" height="20" viewBox="0 0 21 20" fill="#fff" stroke="#222" stroke-width="1.200"><path d="M1 1h19l-7 9v9H8v-9z"/></svg></span>
      <span class="wide-txt">フィルター(<u>F</u>)</span>
    </a>
    <a class="dropdown-item disabled d-flex align-items-center" href="#">
      <span class="icon-slot"><svg width="21" height="20" viewBox="0 0 21 20" fill="none" stroke="#aaa" stroke-width="1.200"><path d="M1 1h19l-7 9M13 10v1M8 19v-9L1 1M8 19h3M13 13l7 6M20 13l-7 6"/></svg></span>
      <span>クリア(<u>C</u>)</span>
    </a>
    <a class="dropdown-item disabled d-flex align-items-center" href="#">
      <span class="icon-slot"><svg width="21" height="20" viewBox="0 0 21 20" fill="none" stroke="#aaa" stroke-width="1.200"><path d="M1 1h19l-7 9M8 19v-9L1 1M8 19h3M13 15a4 4 0 0 1 7-2M20 16a4 4 0 0 1-7 2"/></svg></span>
      <span>再適用(<u>Y</u>)</span>
    </a>
  </div>
  <div class="redmark rm-1"></div>
  <div class="redmark rm-2"></div>
  <div class="redmark rm-3"></div>
</div>

<script src="https://cdn.jsdelivr.net/npm/bootstrap@5.3.1/dist/js/bootstrap.bundle.min.js"></script>
<script>
  // Worksheet content: column C holds the raw values, column E the sorted ones
  const rawValues = ["元の値", 12, 33, 11, 45, 632, 43, 542, 654, 65, 341, 425, 65, 32];
  const sortedValues = ["ソート後", 11, 12, 32, 33, 43, 45, 65, 65, 341, 425, 542, 632, 654];
  const columns = "ABCDEFGHIJKLMNOPQRSTU".split("");

  let colsHtml = '<col class="c-head">';
  let headHtml = '<th class="corner"><div class="corner-mark"></div></th>';
  columns.forEach(c => {
    colsHtml += '<col class="c-std">';
    headHtml += `<th class="${c === "E" ? "on" : ""}">${c}</th>`;
  });
  colsHtml += '<col class="c-end">';
  headHtml += '<th class="tail"></th>';
  document.getElementById("gridCols").innerHTML = colsHtml;
  document.getElementById("gridHead").innerHTML = headHtml;

  let bodyHtml = "";
  for (let r = 0; r < 15; r++) {
    bodyHtml += `<tr><th>${r + 1}</th>`;
    columns.forEach(c => {
      let cls = "";
      let val = "";
      if (c === "C" && rawValues[r] !== undefined) val = rawValues[r];
      if (c === "E") {
        cls = r === 0 ? "active" : "sel";
        if (sortedValues[r] !== undefined) val = sortedValues[r];
      }
      if (r === 0 && val !== "") cls += " txt";
      bodyHtml += `<td class="${cls}">${val}</td>`;
    });
    bodyHtml += '<td class="tail"></td></tr>';
  }
  document.getElementById("gridBody").innerHTML = bodyHtml;
</script>
</body>
</html>
